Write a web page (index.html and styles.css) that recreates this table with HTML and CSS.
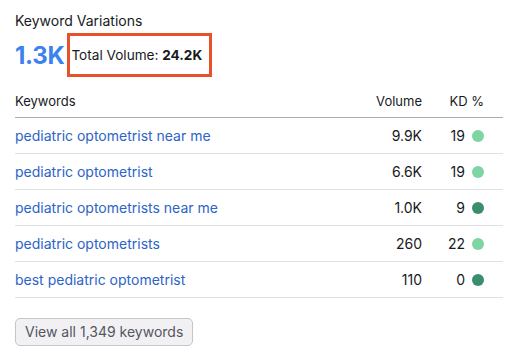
FILE: index.html
```html
<!DOCTYPE html>
<html>
<head>
<meta charset="utf-8">
<link rel="stylesheet" href="styles.css">
</head>
<body>
<div class="card">
  <div class="title">Keyword Variations</div>
  <div class="summary">
    <span class="big">1.3K</span>
    <span class="total">Total Volume: <b>24.2K</b></span>
  </div>
  <table class="kw">
    <thead>
      <tr><th class="c-kw">Keywords</th><th class="c-vol">Volume</th><th class="c-kd">KD %</th></tr>
    </thead>
    <tbody>
      <tr><td class="c-kw"><a>pediatric optometrist near me</a></td><td class="c-vol">9.9K</td><td class="c-kd">19<span class="dot light"></span></td></tr>
      <tr><td class="c-kw"><a>pediatric optometrist</a></td><td class="c-vol">6.6K</td><td class="c-kd">19<span class="dot light"></span></td></tr>
      <tr><td class="c-kw"><a>pediatric optometrists near me</a></td><td class="c-vol">1.0K</td><td class="c-kd">9<span class="dot dark"></span></td></tr>
      <tr><td class="c-kw"><a>pediatric optometrists</a></td><td class="c-vol">260</td><td class="c-kd">22<span class="dot light"></span></td></tr>
      <tr><td class="c-kw"><a>best pediatric optometrist</a></td><td class="c-vol">110</td><td class="c-kd">0<span class="dot dark"></span></td></tr>
    </tbody>
  </table>
  <button class="viewall">View all 1,349 keywords</button>
</div>
</body>
</html>
```
FILE: styles.css
```css
* { box-sizing: border-box; }
html, body { margin: 0; padding: 0; background: #fff; }
body { font-family: Inter, "Noto Sans", sans-serif; color: #171a22; }
.card { width: 517px; padding: 12px 14px 0 15px; }
.title { font-size: 14px; line-height: 18px; color: #171a22; }
.summary { display: flex; align-items: center; margin-top: 3px; height: 44px; }
.big { font-size: 24px; font-weight: 700; color: #3b82f0; letter-spacing: -0.3px; margin-right: 3px; }
.total { font-size: 13.6px; border: 3px solid #e8522b; padding: 0 7px 0 1px; height: 44px; display: flex; align-items: center; white-space: pre; }
.total b { font-weight: 700; }
.kw { width: 100%; border-collapse: collapse; margin-top: 8px; }
.kw th { font-size: 13px; font-weight: 400; color: #171a22; height: 32px; text-align: left; border-bottom: 1px solid #a9acb6; padding: 0; vertical-align: middle; }
.kw td { font-size: 14px; height: 36px; border-bottom: 1px solid #dfe0e4; padding: 0; color: #171a22; }
.kw a { color: #2c64c8; }
.kw .c-vol { text-align: right; width: 90px; }
.kw .c-kd { text-align: right; width: 81px; padding-right: 19px; }
.dot { display: inline-block; width: 12px; height: 12px; border-radius: 50%; margin-left: 7px; vertical-align: -1px; }
.dot.light { background: #7ed5a4; }
.dot.dark { background: #3b8d6d; }
.viewall { margin-top: 20px; font-family: Inter, sans-serif; font-size: 14px; color: #545660; background: #f1f1f4; border: 1px solid #c4c5cd; border-radius: 5px; height: 28px; padding: 0 9px; }
```
